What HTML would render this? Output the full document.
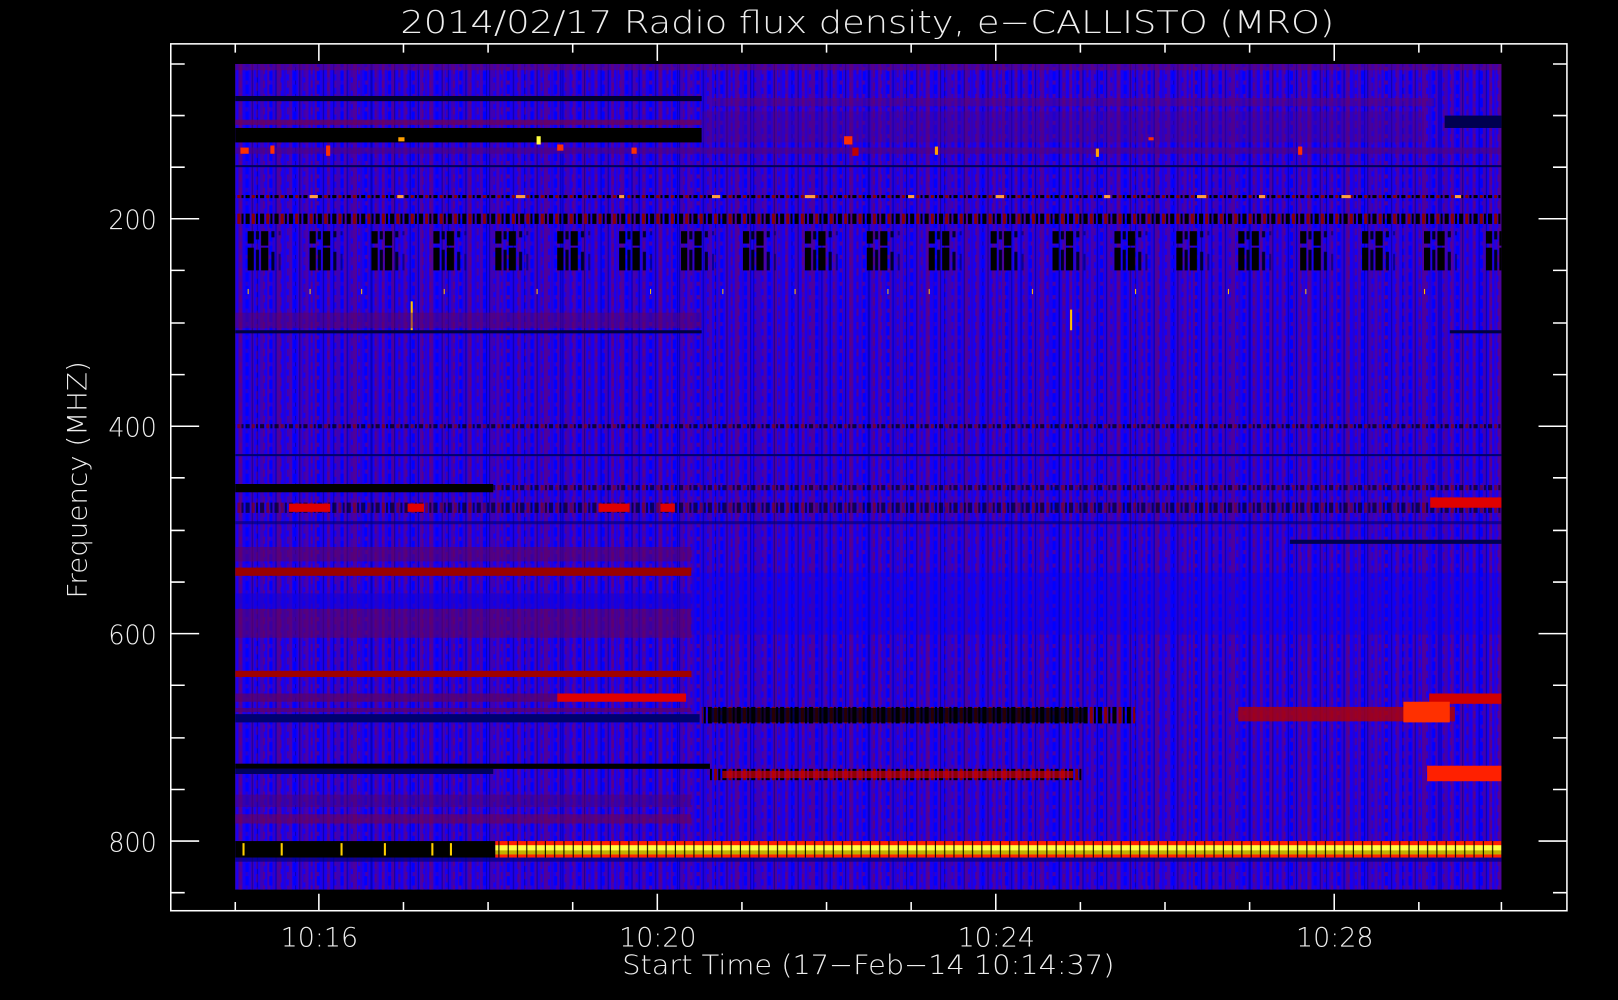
<!DOCTYPE html>
<html><head><meta charset="utf-8"><style>
html,body{margin:0;padding:0;background:#000;width:1618px;height:1000px;overflow:hidden}
svg{display:block}
text{font-family:"DejaVu Sans","Liberation Sans",sans-serif;font-weight:200;fill:#eee}
</style></head><body>
<svg width="1618" height="1000" viewBox="0 0 1568 969" preserveAspectRatio="none" xmlns="http://www.w3.org/2000/svg">
<defs>
<pattern id="v1" width="37" height="10" patternUnits="userSpaceOnUse">
<rect x="0" y="0" width="3" height="10" fill="#5a0090"/><rect x="5" y="0" width="2" height="10" fill="#4000b0"/>
<rect x="9" y="0" width="4" height="10" fill="#600080"/><rect x="16" y="0" width="2" height="10" fill="#3000c0"/>
<rect x="21" y="0" width="3" height="10" fill="#550095"/><rect x="27" y="0" width="1" height="10" fill="#0000a0"/>
<rect x="30" y="0" width="4" height="10" fill="#4a00a0"/>
</pattern>
<pattern id="v2" width="23" height="13" patternUnits="userSpaceOnUse">
<rect x="2" y="0" width="2" height="7" fill="#6a0070" opacity=".6"/><rect x="8" y="4" width="3" height="9" fill="#0000ff"/>
<rect x="14" y="0" width="1" height="13" fill="#000090" opacity=".7"/><rect x="18" y="2" width="2" height="8" fill="#700060" opacity=".5"/>
</pattern>
<pattern id="blk" width="60" height="40" patternUnits="userSpaceOnUse">
<rect x="0" y="0" width="6" height="36" fill="#000"/><rect x="8" y="2" width="3" height="30" fill="#000020"/>
<rect x="13" y="0" width="7" height="38" fill="#000"/><rect x="23" y="4" width="3" height="26" fill="#000030"/>
<rect x="30" y="6" width="2" height="22" fill="#000060" opacity=".6"/>
</pattern>
<pattern id="dash" width="14" height="10" patternUnits="userSpaceOnUse">
<rect x="0" width="4" height="10" fill="#000"/><rect x="6" width="3" height="10" fill="#8b0000"/><rect x="10" width="2" height="10" fill="#000"/>
</pattern>
<pattern id="yel" width="9" height="16" patternUnits="userSpaceOnUse">
<rect width="9" height="16" fill="#ff2000"/><rect y="3" width="9" height="8" fill="#ffff40"/><rect y="8" width="9" height="4" fill="#c0b000"/><rect x="6" width="1" height="16" fill="#000"/>
</pattern>
</defs>
<rect width="1568" height="969" fill="#000"/>
<g>
<rect x="228" y="62" width="1227" height="800" fill="#1800f0"/>
<rect x="228" y="62" width="1227" height="800" fill="url(#v1)" opacity=".75"/>
<rect x="228" y="62" width="1227" height="800" fill="url(#v2)"/>
<rect x="228" y="62" width="1227" height="6" fill="#6a0060" opacity=".5"/>
<rect x="228" y="93" width="452" height="5" fill="#000030"/>
<rect x="690" y="95" width="700" height="8" fill="#600070" opacity=".5"/>
<rect x="228" y="116" width="452" height="5" fill="#700050" opacity=".7"/>
<rect x="228" y="124" width="452" height="14" fill="#000"/>
<rect x="680" y="108" width="700" height="30" fill="#500080" opacity=".4"/>
<rect x="1400" y="112" width="55" height="12" fill="#000050"/>
<rect x="228" y="143" width="1227" height="6" fill="#500080" opacity=".6"/>
<g fill="#ff3000"><rect x="233" y="143" width="8" height="6"/><rect x="262" y="141" width="4" height="8"/><rect x="316" y="141" width="4" height="10"/><rect x="386" y="133" width="6" height="4" fill="#ffa000"/><rect x="520" y="132" width="4" height="8" fill="#ffff40"/><rect x="540" y="140" width="6" height="6"/><rect x="612" y="143" width="5" height="6"/><rect x="818" y="132" width="8" height="8"/><rect x="826" y="143" width="6" height="8" fill="#c00000"/><rect x="906" y="142" width="3" height="8" fill="#ffa000"/><rect x="1062" y="144" width="3" height="8" fill="#ffa000"/><rect x="1258" y="142" width="4" height="8"/><rect x="1113" y="133" width="5" height="3"/></g>
<rect x="228" y="160" width="1227" height="2" fill="#000060"/>
<rect x="228" y="189" width="1227" height="3" fill="url(#dash)"/>
<g fill="#ffa040"><rect x="300" y="189" width="8" height="3"/><rect x="385" y="189" width="6" height="3"/><rect x="500" y="189" width="9" height="3"/><rect x="600" y="189" width="5" height="3"/><rect x="690" y="189" width="8" height="3"/><rect x="780" y="189" width="10" height="3"/><rect x="880" y="189" width="6" height="3"/><rect x="965" y="189" width="8" height="3"/><rect x="1070" y="189" width="6" height="3"/><rect x="1160" y="189" width="9" height="3"/><rect x="1220" y="189" width="6" height="3"/><rect x="1300" y="189" width="9" height="3"/><rect x="1410" y="189" width="6" height="3"/></g>
<rect x="228" y="207" width="1227" height="10" fill="url(#dash)"/>
<rect x="228" y="224" width="1227" height="38" fill="url(#blk)"/>
<g fill="#ffc000"><rect x="240" y="280" width="1" height="5"/><rect x="300" y="280" width="1" height="5"/><rect x="350" y="280" width="1" height="5"/><rect x="430" y="280" width="1" height="5"/><rect x="520" y="280" width="1" height="5"/><rect x="630" y="280" width="1" height="5"/><rect x="700" y="280" width="1" height="5"/><rect x="770" y="280" width="1" height="5"/><rect x="860" y="280" width="1" height="5"/><rect x="900" y="280" width="1" height="5"/><rect x="1000" y="280" width="1" height="5"/><rect x="1100" y="280" width="1" height="5"/><rect x="1190" y="280" width="1" height="5"/><rect x="1265" y="280" width="1" height="5"/><rect x="1380" y="280" width="1" height="5"/><rect x="398" y="292" width="2" height="28"/><rect x="1037" y="300" width="2" height="20"/></g>
<rect x="228" y="303" width="452" height="15" fill="#600060" opacity=".5"/>
<rect x="228" y="320" width="452" height="3" fill="#000040"/>
<rect x="1405" y="320" width="50" height="3" fill="#000040"/>
<rect x="228" y="411" width="1227" height="4" fill="url(#dash)" opacity=".7"/>
<rect x="228" y="440" width="1227" height="2" fill="#000070"/>
<rect x="228" y="469" width="250" height="8" fill="#000"/>
<rect x="478" y="470" width="977" height="5" fill="url(#dash)" opacity=".6"/>
<rect x="228" y="487" width="1227" height="10" fill="url(#dash)" opacity=".6"/>
<g fill="#e00000"><rect x="280" y="488" width="40" height="8"/><rect x="395" y="488" width="16" height="8"/><rect x="580" y="488" width="30" height="8"/><rect x="640" y="488" width="14" height="8"/><rect x="1386" y="482" width="69" height="10"/></g>
<rect x="228" y="505" width="1227" height="3" fill="#000070" opacity=".6"/>
<rect x="1250" y="523" width="205" height="4" fill="#000050"/>
<rect x="228" y="530" width="442" height="14" fill="#600060" opacity=".6"/>
<rect x="228" y="550" width="442" height="8" fill="#9a0000"/>
<rect x="228" y="575" width="442" height="15" fill="#1000e0" opacity=".6"/>
<rect x="228" y="590" width="442" height="28" fill="#600060" opacity=".6"/>
<rect x="670" y="555" width="785" height="60" fill="#0000ff" opacity=".35"/>
<rect x="228" y="650" width="442" height="6" fill="#a00000"/>
<rect x="540" y="672" width="125" height="8" fill="#e00000"/>
<rect x="228" y="672" width="312" height="8" fill="#600060" opacity=".7"/>
<rect x="1385" y="672" width="70" height="10" fill="#d00000"/>
<rect x="228" y="686" width="442" height="4" fill="#600060" opacity=".7"/>
<rect x="228" y="692" width="450" height="8" fill="#000070"/>
<rect x="680" y="685" width="420" height="16" fill="url(#dash)"/>
<rect x="690" y="686" width="360" height="14" fill="#000" opacity=".7"/>
<rect x="1200" y="685" width="210" height="14" fill="#b00000" opacity=".8"/>
<rect x="1360" y="680" width="45" height="20" fill="#ff3000"/>
<rect x="228" y="740" width="460" height="5" fill="#000"/>
<rect x="228" y="745" width="250" height="5" fill="#000060"/>
<rect x="688" y="745" width="360" height="11" fill="url(#dash)"/>
<rect x="700" y="747" width="340" height="7" fill="#d00000" opacity=".7"/>
<rect x="1383" y="742" width="72" height="15" fill="#ff2000"/>
<rect x="228" y="770" width="442" height="12" fill="#500070" opacity=".5"/>
<rect x="228" y="789" width="442" height="9" fill="#700050" opacity=".6"/>
<rect x="228" y="815" width="252" height="16" fill="#000"/>
<g fill="#ffd000"><rect x="235" y="817" width="2" height="12"/><rect x="272" y="817" width="2" height="12"/><rect x="330" y="817" width="2" height="12"/><rect x="372" y="817" width="2" height="12"/><rect x="418" y="817" width="2" height="12"/><rect x="436" y="817" width="2" height="12"/></g>
<rect x="480" y="815" width="975" height="16" fill="url(#yel)"/>
<rect x="228" y="831" width="1227" height="4" fill="#000080" opacity=".7"/>
</g>
<rect x="165.5" y="42.5" width="1353" height="840" fill="none" stroke="#fff" stroke-width="1.5"/>
<g stroke="#fff" stroke-width="1.5">
<path d="M165 62h14M165 112h14M165 162h14M165 212h28M165 262h14M165 313h14M165 363h14M165 413h28M165 463h14M165 514h14M165 564h14M165 614h28M165 664h14M165 715h14M165 765h14M165 815h28M165 865h14"/>
<path d="M1519 62h-14M1519 112h-14M1519 162h-14M1519 212h-28M1519 262h-14M1519 313h-14M1519 363h-14M1519 413h-28M1519 463h-14M1519 514h-14M1519 564h-14M1519 614h-28M1519 664h-14M1519 715h-14M1519 765h-14M1519 815h-28M1519 865h-14"/>
<path d="M228 883v-9M309 883v-17M391 883v-9M473 883v-9M555 883v-9M637 883v-17M719 883v-9M801 883v-9M883 883v-9M965 883v-17M1047 883v-9M1129 883v-9M1211 883v-9M1293 883v-17M1375 883v-9M1455 883v-9"/>
<path d="M228 42v9M309 42v17M391 42v9M473 42v9M555 42v9M637 42v17M719 42v9M801 42v9M883 42v9M965 42v17M1047 42v9M1129 42v9M1211 42v9M1293 42v17M1375 42v9M1455 42v9"/>
</g>
<text x="388" y="32" font-size="30" textLength="905" lengthAdjust="spacingAndGlyphs">2014/02/17  Radio flux density, e−CALLISTO (MRO)</text>
<g font-size="26">
<text x="105" y="222" textLength="47" lengthAdjust="spacingAndGlyphs">200</text>
<text x="105" y="423" textLength="47" lengthAdjust="spacingAndGlyphs">400</text>
<text x="105" y="624" textLength="47" lengthAdjust="spacingAndGlyphs">600</text>
<text x="105" y="825" textLength="47" lengthAdjust="spacingAndGlyphs">800</text>
<text x="272" y="917" textLength="75" lengthAdjust="spacingAndGlyphs">10:16</text>
<text x="600" y="917" textLength="75" lengthAdjust="spacingAndGlyphs">10:20</text>
<text x="928" y="917" textLength="75" lengthAdjust="spacingAndGlyphs">10:24</text>
<text x="1256" y="917" textLength="75" lengthAdjust="spacingAndGlyphs">10:28</text>
<text x="603" y="944" textLength="477" lengthAdjust="spacingAndGlyphs">Start Time (17−Feb−14 10:14:37)</text>
<text transform="translate(84,580) rotate(-90)" x="0" y="0" textLength="230" lengthAdjust="spacingAndGlyphs">Frequency (MHZ)</text>
</g>
</svg>
</body></html>
